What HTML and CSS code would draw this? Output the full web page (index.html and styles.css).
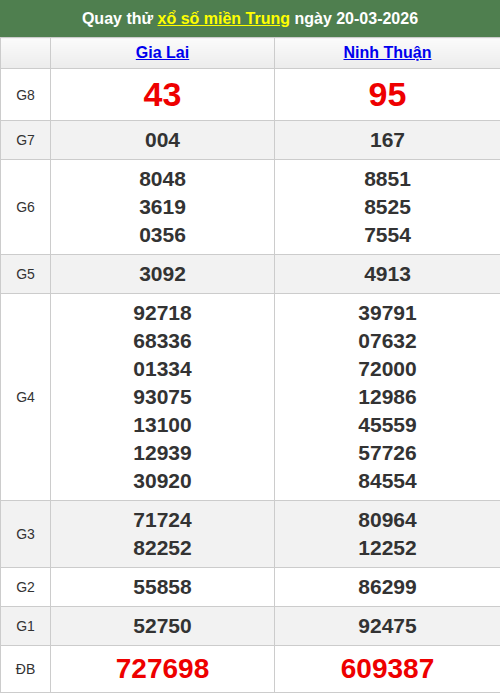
FILE: index.html
```html
<!DOCTYPE html>
<html>
<head>
<meta charset="utf-8">
<link rel="stylesheet" href="styles.css">
</head>
<body>
<div class="title">Quay thử <a class="title-link" href="#">xổ số miền Trung</a> ngày 20-03-2026</div>
<table class="kq">
  <colgroup><col class="c-label"><col class="c-prov1"><col class="c-prov2"></colgroup>
  <thead>
    <tr><th class="h-empty"></th><th><a href="#">Gia Lai</a></th><th><a href="#">Ninh Thuận</a></th></tr>
  </thead>
  <tbody>
    <tr class="g8"><td class="lbl">G8</td><td class="num big">43</td><td class="num big">95</td></tr>
    <tr class="alt"><td class="lbl">G7</td><td class="num">004</td><td class="num">167</td></tr>
    <tr><td class="lbl">G6</td><td class="num"><div>8048</div><div>3619</div><div>0356</div></td><td class="num"><div>8851</div><div>8525</div><div>7554</div></td></tr>
    <tr class="alt"><td class="lbl">G5</td><td class="num">3092</td><td class="num">4913</td></tr>
    <tr><td class="lbl">G4</td><td class="num"><div>92718</div><div>68336</div><div>01334</div><div>93075</div><div>13100</div><div>12939</div><div>30920</div></td><td class="num"><div>39791</div><div>07632</div><div>72000</div><div>12986</div><div>45559</div><div>57726</div><div>84554</div></td></tr>
    <tr class="alt"><td class="lbl">G3</td><td class="num"><div>71724</div><div>82252</div></td><td class="num"><div>80964</div><div>12252</div></td></tr>
    <tr><td class="lbl">G2</td><td class="num">55858</td><td class="num">86299</td></tr>
    <tr class="alt"><td class="lbl">G1</td><td class="num">52750</td><td class="num">92475</td></tr>
    <tr class="db"><td class="lbl">ĐB</td><td class="num special">727698</td><td class="num special">609387</td></tr>
  </tbody>
</table>
</body>
</html>
```
FILE: styles.css
```css
html, body {
  margin: 0;
  padding: 0;
  background: #fff;
}
body {
  font-family: "Liberation Sans", Arial, sans-serif;
  width: 500px;
}
.title {
  background: #4f7f4f;
  color: #fff;
  font-weight: bold;
  font-size: 16px;
  height: 37px;
  line-height: 37px;
  text-align: center;
}
.title-link {
  color: #ffff00;
  text-decoration: underline;
}
.kq {
  width: 500px;
  border-collapse: collapse;
  table-layout: fixed;
}
.c-label { width: 50px; }
.c-prov1 { width: 224px; }
.c-prov2 { width: 226px; }
.kq th, .kq td {
  border: 1px solid #cccccc;
  padding: 0;
  text-align: center;
  vertical-align: middle;
}
.kq th {
  height: 30px;
  background: linear-gradient(to bottom, #fbfbfb, #ececec);
  font-size: 16px;
  font-weight: bold;
}
.kq th a {
  color: #0000ee;
  text-decoration: underline;
}
.lbl {
  font-size: 14px;
  color: #333;
}
.num {
  font-size: 21px;
  font-weight: bold;
  color: #333;
  line-height: 28px;
  padding: 5px 0 !important;
}
.alt td {
  background: #f2f2f2;
}
.big {
  font-size: 34px;
  color: #ee0000;
  line-height: 41px;
}
.special {
  font-size: 28px;
  color: #ee0000;
  line-height: 36px;
}
```
